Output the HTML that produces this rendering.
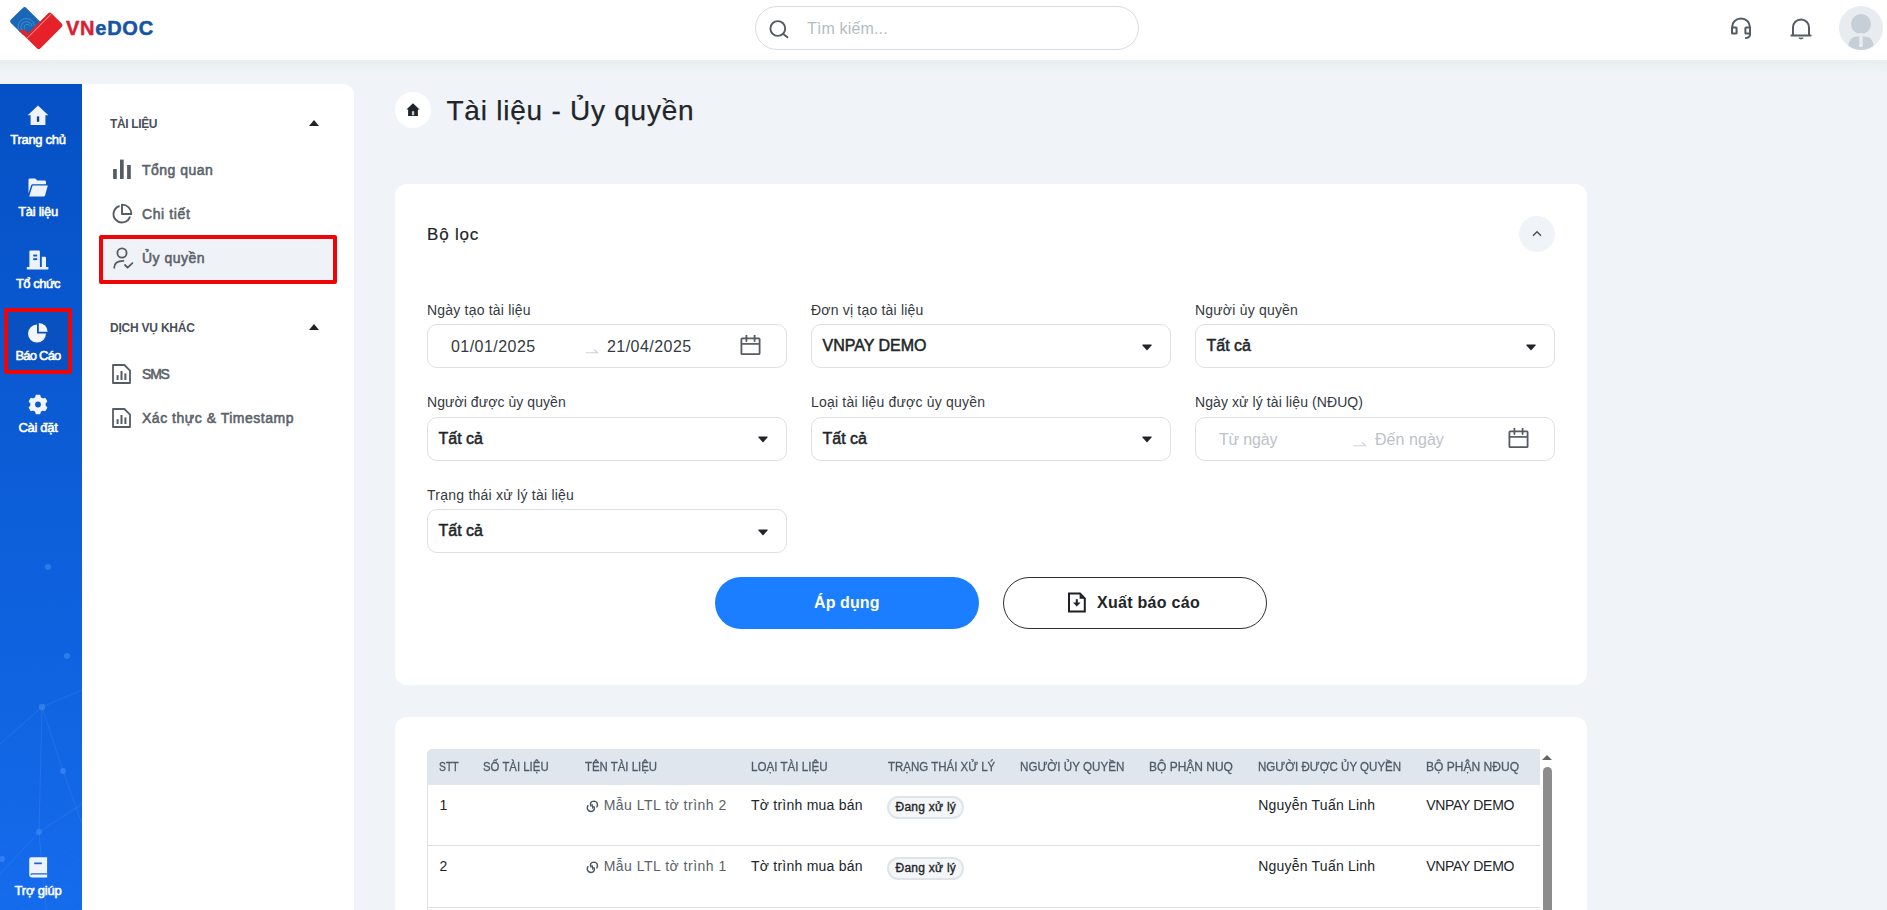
<!DOCTYPE html>
<html lang="vi">
<head>
<meta charset="utf-8">
<title>VNeDOC - Tài liệu - Ủy quyền</title>
<style>
*{box-sizing:border-box;margin:0;padding:0}
html,body{width:1887px;height:910px;overflow:hidden}
body{font-family:"Liberation Sans",sans-serif;background:#f0f4f8;color:#212529;position:relative}
.abs{position:absolute}
svg{display:block}

/* ---------- header ---------- */
#header{position:absolute;left:0;top:0;width:1887px;height:60px;background:#fff}
#hshadow{position:absolute;left:0;top:60px;width:1887px;height:14px;background:linear-gradient(#e8edef,#f0f4f8)}
#logo{position:absolute;left:0;top:0}
#logotext{position:absolute;left:66px;top:13.5px;font-size:20px;font-weight:700;letter-spacing:0.75px;line-height:28px;white-space:nowrap;-webkit-text-stroke:0.5px currentColor}
#search{position:absolute;left:755px;top:6px;width:384px;height:44px;border:1px solid #d9dcdf;border-radius:22px;background:#fff}
#search .ph{position:absolute;left:51px;top:12px;font-size:16px;line-height:20px;color:#b4bcc3;white-space:nowrap;letter-spacing:0.15px}
#search svg{position:absolute;left:12px;top:10px}

/* ---------- blue sidebar ---------- */
#side{position:absolute;left:0;top:84px;width:82px;height:826px;background:linear-gradient(180deg,#0550c4 0%,#146bec 100%);overflow:hidden}
.nav{position:absolute;left:0;width:76px;text-align:center;color:#fff;font-size:13px;font-weight:400;line-height:15px;white-space:nowrap;-webkit-text-stroke:0.55px #fff}
.nav svg{margin:0 auto 5px auto}
#redbox1{position:absolute;left:4px;top:224px;width:68px;height:66px;border:4px solid #ef0505;border-radius:2px}

/* ---------- white submenu ---------- */
#sub{position:absolute;left:82px;top:84px;width:272px;height:826px;background:#fff;border-top-right-radius:11px}
.grp{position:absolute;left:28px;font-size:12px;font-weight:700;color:#495057;line-height:14px;white-space:nowrap}
.caret{position:absolute;left:227px;width:0;height:0;border-left:5px solid transparent;border-right:5px solid transparent;border-bottom:6px solid #1f2429}
.item{position:absolute;left:60px;font-size:14px;font-weight:400;color:#5a6269;line-height:18px;white-space:nowrap;letter-spacing:0.47px;-webkit-text-stroke:0.55px #5a6269}
.iico{position:absolute;left:28px}
#active{position:absolute;left:19px;top:154px;width:235px;height:45px;background:#eff3f7}
#redbox2{position:absolute;left:17.4px;top:151.4px;width:237.9px;height:48.4px;border:4px solid #ef0505;border-radius:2px}

/* ---------- main ---------- */
#homec{position:absolute;left:395px;top:92px;width:36px;height:36px;border-radius:50%;background:#fff}
#title{position:absolute;left:446.5px;top:95px;font-size:28px;line-height:32px;letter-spacing:0.76px;-webkit-text-stroke:0.25px #212529;color:#212529;white-space:nowrap}
.card{position:absolute;left:395px;width:1192px;background:#fff;border-radius:12px}
#fcard{top:184px;height:501px}
#tcard{top:717px;height:240px}
#fttl{position:absolute;left:32px;top:41px;font-size:17px;line-height:20px;letter-spacing:0.8px;-webkit-text-stroke:0.2px #212529;color:#212529;white-space:nowrap}
#collapse{position:absolute;left:1124px;top:32px;width:36px;height:36px;border-radius:50%;background:#f0f4f8}
.lbl{position:absolute;font-size:14px;line-height:16px;color:#343a40;white-space:nowrap}
.inp{position:absolute;width:360px;height:44px;border:1px solid #dddfe2;border-radius:10px;background:#fff}
.sel{position:absolute;left:10.5px;top:11px;font-size:16px;font-weight:400;line-height:20px;color:#212529;white-space:nowrap;-webkit-text-stroke:0.5px #212529}
.dcaret{position:absolute;left:329px;top:18.5px}
.dt{position:absolute;top:12px;font-size:16px;line-height:20px;color:#343a40;white-space:nowrap;letter-spacing:0.45px}
.dph{color:#bcc2c8;letter-spacing:0.05px}
.cal{position:absolute;left:312px;top:10px}
.arr{position:absolute;left:157px;top:23px}
.btn{position:absolute;top:393px;width:264px;height:52px;border-radius:26px;font-size:16px;font-weight:700;line-height:20px;white-space:nowrap}
#bapply{left:320px;background:#1b7dff;color:#fff}
#bexport{left:608px;background:#fff;border:1px solid #2c3136;color:#212529}
/* table */
#thead{position:absolute;left:32px;top:32px;width:1113px;height:36px;background:#dfe6ee;border-top-left-radius:5px}
.th{position:absolute;top:10px;font-size:12.5px;line-height:16px;color:#4f5b67;-webkit-text-stroke:0.3px #4f5b67;white-space:nowrap;transform-origin:0 50%}
.td{position:absolute;font-size:14px;line-height:16px;color:#212529;white-space:nowrap}
.rowline{position:absolute;left:32px;width:1113px;height:1px;background:#dee2e6}
.badge{position:absolute;left:491.5px;width:77px;height:23px;border:2px solid #dfe4e8;border-radius:12px;background:#f4f6f8;font-size:12px;font-weight:400;line-height:19.5px;text-align:center;color:#212529;white-space:nowrap;letter-spacing:0.25px;padding-left:1.6px;-webkit-text-stroke:0.35px #212529}
</style>
</head>
<body>

<!-- HEADER -->
<div id="header">
  <svg id="logo" width="70" height="56" viewBox="0 0 70 56">
    <path d="M22.8 7.9 Q24.6 6.1 26.4 7.9 L40.5 22 L28 35 L23 35 L10.9 23 Q9.1 21.2 10.9 19.4 Z" fill="#1a67b5"/>
    <g fill="none" stroke="#3f93dc" stroke-width="0.9">
      <path d="M25 29.5 a3 3 0 1 1 5 -3"/>
      <path d="M22.4 31 a5.6 5.6 0 1 1 9.6 -5"/>
      <path d="M20 32 a8.2 8.2 0 1 1 14.4 -6.6"/>
    </g>
    <path d="M19.3 31 L36.9 48.3 Q38.7 50.1 40.5 48.3 L61.7 27.1 Q63.5 25.3 61.7 23.5 L51.6 13.4 Q49.8 11.6 48 13.4 L27.8 33.6 L23.6 29.4 Q21 29.4 19.3 31 Z" fill="#e62129"/>
    <path d="M50.8 14.5 L27 38.3" stroke="#fff" stroke-width="0.7" fill="none" opacity="0.9"/>
  </svg>
  <div id="logotext"><span style="color:#d81f35">VN</span><span style="color:#15569f">eDOC</span></div>

  <div id="search">
    <svg width="26" height="26" viewBox="0 0 26 26"><circle cx="9.8" cy="11.5" r="7.4" fill="none" stroke="#555c63" stroke-width="1.9"/><path d="M15.6 17.2 L19.4 20.2" stroke="#555c63" stroke-width="2" stroke-linecap="round"/></svg>
    <div class="ph">Tìm kiếm...</div>
  </div>

  <!-- headset -->
  <svg class="abs" style="left:1729px;top:16px" width="24" height="25" viewBox="0 0 24 25"><path d="M3 14 V11.4 A9 9 0 0 1 21 11.4 V14" fill="none" stroke="#555c63" stroke-width="2"/><rect x="3" y="11.6" width="4.6" height="6" rx="0.6" fill="none" stroke="#555c63" stroke-width="2"/><rect x="16.4" y="11.6" width="4.6" height="6" rx="0.6" fill="none" stroke="#555c63" stroke-width="2"/><path d="M21 17 V18.4 Q21 21.4 17 22" fill="none" stroke="#555c63" stroke-width="2" stroke-linecap="round"/></svg>
  <!-- bell -->
  <svg class="abs" style="left:1789px;top:16px" width="24" height="25" viewBox="0 0 24 25"><path d="M4 19 V11.4 A8 8 0 0 1 20 11.4 V19" fill="none" stroke="#555c63" stroke-width="2"/><path d="M2.4 19.4 H21.6" stroke="#555c63" stroke-width="2" stroke-linecap="round"/><path d="M9.8 22 H14.2 Q12 24.2 9.8 22 Z" fill="#555c63" stroke="#555c63" stroke-width="0.8" stroke-linejoin="round"/></svg>
  <!-- avatar -->
  <svg class="abs" style="left:1839px;top:6px" width="44" height="44" viewBox="0 0 44 44"><defs><clipPath id="avc"><circle cx="22" cy="22" r="22"/></clipPath></defs><circle cx="22" cy="22" r="22" fill="#e8ecf1"/><g clip-path="url(#avc)"><circle cx="22" cy="18" r="10" fill="#c6ced7"/><path d="M9 44 Q9 31 18 30.6 H26 Q35 31 35 44 Z" fill="#c6ced7"/><rect x="20.3" y="27" width="3.4" height="14" fill="#e8ecf1"/></g></svg>
</div>
<div id="hshadow"></div>

<!-- BLUE SIDEBAR -->
<div id="side">
  <svg class="abs" style="left:0;top:0" width="82" height="826" viewBox="0 0 82 826">
    <defs><pattern id="hatch" width="14" height="14" patternUnits="userSpaceOnUse" patternTransform="rotate(32)"><path d="M0 0 H14" stroke="#4b92f3" stroke-width="0.6" opacity="0.22"/></pattern>
    <linearGradient id="hfade" x1="0" y1="0" x2="0" y2="1"><stop offset="0" stop-color="#fff" stop-opacity="0"/><stop offset="0.55" stop-color="#fff" stop-opacity="0"/><stop offset="1" stop-color="#fff" stop-opacity="1"/></linearGradient>
    <mask id="hm"><rect width="82" height="826" fill="url(#hfade)"/></mask></defs>
    <rect width="82" height="826" fill="url(#hatch)" mask="url(#hm)"/>
    <g stroke="#4f95f4" stroke-width="0.7" opacity="0.4" fill="none">
      <path d="M42 623 L39 748 M42 623 L82 606 M42 623 L0 660 M39 748 L0 790 M39 748 L82 720 M63 687 L42 623 M63 687 L82 740 M39 748 L46 826"/>
    </g>
    <g fill="#4a90f2" opacity="0.55">
      <circle cx="48" cy="483" r="3"/><circle cx="67" cy="572" r="3"/><circle cx="42" cy="623" r="3.2"/><circle cx="63" cy="687" r="3"/><circle cx="39" cy="748" r="3"/><circle cx="2" cy="775" r="3"/>
    </g>
  </svg>
  <div class="abs" style="left:7px;top:228px;width:63px;height:59px;background:#0950c1"></div>

  <!-- Trang chu -->
  <svg class="abs" style="left:27px;top:21px" width="22" height="21" viewBox="0 0 22 21"><path d="M11 0.5 L21.3 10.2 H18.4 V20 H3.6 V10.2 H0.7 Z" fill="#eef3fb"/><rect x="9.9" y="11.4" width="2.3" height="5.4" fill="#163f7d"/></svg>
  <div class="nav" style="top:48px;letter-spacing:-0.3px">Trang chủ</div>
  <!-- Tai lieu -->
  <svg class="abs" style="left:28px;top:94px" width="20" height="19" viewBox="0 0 20 19"><path d="M0.5 2 Q0.5 0.6 1.9 0.6 H7.2 L9.4 2.6 H16.6 Q18 2.6 18 4 V6.2 H4.6 Q3.5 6.2 3.2 7.2 L0.5 15.5 Z" fill="#eef3fb"/><path d="M4.6 7.6 H19.8 L17 17.4 Q16.7 18.4 15.6 18.4 H1.2 Z" fill="#eef3fb"/></svg>
  <div class="nav" style="top:120px;letter-spacing:-0.27px">Tài liệu</div>
  <!-- To chuc -->
  <svg class="abs" style="left:26px;top:166px" width="23" height="20" viewBox="0 0 23 20"><path d="M3.4 17.6 V1.6 Q3.4 0.5 4.5 0.5 H12.8 Q13.9 0.5 13.9 1.6 V17.6 Z" fill="#eef3fb"/><path d="M15.8 17.6 V6.8 H19 Q20 6.8 20 7.8 V17.6 Z" fill="#eef3fb"/><rect x="0.8" y="17" width="21.6" height="2.4" rx="0.6" fill="#eef3fb"/><rect x="7.2" y="4.6" width="4" height="1.9" fill="#0a59d1"/><rect x="7.2" y="8.2" width="4" height="1.9" fill="#0a59d1"/></svg>
  <div class="nav" style="top:192px;letter-spacing:-0.5px">Tổ chức</div>
  <!-- Bao cao -->
  <svg class="abs" style="left:28px;top:237.5px" width="21" height="21" viewBox="0 0 21 21"><path d="M9 2.6 V11.6 H18 A9 9 0 1 1 9 2.6 Z" fill="#f2f6fc"/><path d="M10.8 1 A8.8 8.8 0 0 1 19.6 9.8 H10.8 Z" fill="#f2f6fc"/></svg>
  <div class="nav" style="top:264px;letter-spacing:-0.78px">Báo Cáo</div>
  <!-- Cai dat -->
  <svg class="abs" style="left:28px;top:309.5px" width="20" height="21" viewBox="0 0 20 21"><path fill="#f2f6fc" stroke="#f2f6fc" stroke-width="1.8" stroke-linejoin="round" fill-rule="evenodd" d="M11.55 1.74 L8.45 1.74 L7.87 3.94 L5.38 5.37 L3.18 4.78 L1.64 7.46 L3.25 9.07 L3.25 11.93 L1.64 13.54 L3.18 16.22 L5.38 15.63 L7.87 17.06 L8.45 19.26 L11.55 19.26 L12.13 17.06 L14.62 15.63 L16.82 16.22 L18.36 13.54 L16.75 11.93 L16.75 9.07 L18.36 7.46 L16.82 4.78 L14.62 5.37 L12.13 3.94 Z M10 6.7 A3.8 3.8 0 1 0 10 14.3 A3.8 3.8 0 1 0 10 6.7 Z"/></svg>
  <div class="nav" style="top:336px;letter-spacing:-0.33px">Cài đặt</div>
  <!-- Tro giup -->
  <svg class="abs" style="left:29px;top:772.6px" width="19" height="21" viewBox="0 0 19 21"><path d="M0.2 2.4 Q0.2 0.3 2.3 0.3 H18.1 V20.4 H2.6 Q0.2 20.4 0.2 18 Z" fill="#eef3fb"/><path d="M18.1 16.9 H3 Q1.9 16.9 1.9 18" fill="none" stroke="#1c63d6" stroke-width="1.1"/><rect x="5.2" y="5.5" width="7.6" height="1.7" fill="#1563de"/></svg>
  <div class="nav" style="top:799px;letter-spacing:-0.2px">Trợ giúp</div>
  <div id="redbox1"></div>
</div>

<!-- SUBMENU -->
<div id="sub">
  <div class="grp" style="top:33px;letter-spacing:-0.36px">TÀI LIỆU</div>
  <div class="caret" style="top:36px"></div>

  <svg class="iico" style="top:75px;left:30px" width="20" height="20" viewBox="0 0 20 20"><rect x="1.1" y="10" width="3.7" height="10" fill="#555d64"/><rect x="8" y="0.6" width="3.7" height="19.4" fill="#555d64"/><rect x="15.1" y="6" width="3.7" height="14" fill="#555d64"/></svg>
  <div class="item" style="top:77px">Tổng quan</div>

  <svg class="iico" style="top:119px;left:29px" width="22" height="22" viewBox="0 0 22 22"><path d="M8.6 3 A8.4 8.4 0 1 0 19 13.4" fill="none" stroke="#555d64" stroke-width="1.9"/><path d="M11 1.6 A9.4 9.4 0 0 1 20.4 11 H11 Z" fill="none" stroke="#555d64" stroke-width="1.9" stroke-linejoin="round"/></svg>
  <div class="item" style="top:121px;letter-spacing:0.6px">Chi tiết</div>

  <div id="active"></div>
  <svg class="iico" style="top:163px;left:31px" width="21" height="22" viewBox="0 0 21 22"><circle cx="9" cy="6" r="4.6" fill="none" stroke="#555d64" stroke-width="1.8"/><path d="M1.2 20.8 Q1.2 14 10.4 13.9" fill="none" stroke="#555d64" stroke-width="1.8" stroke-linecap="round"/><path d="M12 18 L14.6 20.6 L19.4 16.2" fill="none" stroke="#555d64" stroke-width="1.8" stroke-linecap="round" stroke-linejoin="round"/></svg>
  <div class="item" style="top:165px">Ủy quyền</div>
  <div id="redbox2"></div>

  <div class="grp" style="top:237px;letter-spacing:-0.22px">DỊCH VỤ KHÁC</div>
  <div class="caret" style="top:240px"></div>

  <svg class="iico" style="top:280px;left:30px" width="19" height="20" viewBox="0 0 19 20"><path d="M1 1 H12.4 L18 6.6 V19 H1 Z" fill="none" stroke="#555d64" stroke-width="1.8" stroke-linejoin="round"/><rect x="4.6" y="11.2" width="2" height="4.8" fill="#555d64"/><rect x="8.5" y="7" width="2" height="9" fill="#555d64"/><rect x="12.4" y="9.4" width="2" height="6.6" fill="#555d64"/></svg>
  <div class="item" style="top:281px;letter-spacing:-1.2px">SMS</div>

  <svg class="iico" style="top:324px;left:30px" width="19" height="20" viewBox="0 0 19 20"><path d="M1 1 H12.4 L18 6.6 V19 H1 Z" fill="none" stroke="#555d64" stroke-width="1.8" stroke-linejoin="round"/><rect x="4.6" y="11.2" width="2" height="4.8" fill="#555d64"/><rect x="8.5" y="7" width="2" height="9" fill="#555d64"/><rect x="12.4" y="9.4" width="2" height="6.6" fill="#555d64"/></svg>
  <div class="item" style="top:325px;letter-spacing:0.52px">Xác thực &amp; Timestamp</div>
</div>

<!-- MAIN -->
<div id="main">
  <div id="homec"><svg class="abs" style="left:11.4px;top:10.6px" width="14" height="14" viewBox="0 0 14 14"><path d="M7 0.3 L13.6 6.6 H11.9 V13 H2.1 V6.6 H0.4 Z" fill="#212529"/><rect x="5.9" y="8.2" width="2.3" height="4" fill="#c9cdd1"/></svg></div>
  <div id="title">Tài liệu - Ủy quyền</div>

  <div class="card" id="fcard">
    <div id="fttl">Bộ lọc</div>
    <div id="collapse"><svg class="abs" style="left:13px;top:14px" width="10" height="7" viewBox="0 0 10 7"><path d="M1 5.8 L5 1.7 L9 5.8" fill="none" stroke="#474d53" stroke-width="1.35"/></svg></div>

    <div class="lbl" style="left:32px;top:118px;letter-spacing:0.2px">Ngày tạo tài liệu</div>
    <div class="inp" style="left:32px;top:140px"><div class="dt" style="left:23px">01/01/2025</div><svg class="arr" width="14" height="6" viewBox="0 0 14 6"><path d="M0.5 4.8 H12.6 L9 1.4" fill="none" stroke="#cdd2d6" stroke-width="1.1"/></svg><div class="dt" style="left:179px">21/04/2025</div><svg class="cal" width="22" height="22" viewBox="0 0 22 22"><rect x="1.4" y="3.4" width="18.2" height="15.8" rx="0.8" fill="none" stroke="#565b61" stroke-width="1.8"/><path d="M1.4 8.9 H19.6" stroke="#565b61" stroke-width="1.7" fill="none"/><path d="M6.4 0.5 V6 M14.6 0.5 V6" stroke="#565b61" stroke-width="1.8" stroke-linecap="round" fill="none"/></svg></div>

    <div class="lbl" style="left:416px;top:118px;letter-spacing:0.2px">Đơn vị tạo tài liệu</div>
    <div class="inp" style="left:416px;top:140px"><div class="sel">VNPAY DEMO</div><svg class="dcaret" width="12" height="8" viewBox="0 0 12 8"><path d="M1.7 0.6 H10.3 Q11 0.7 10.5 1.4 L6.5 6 Q6 6.5 5.5 6 L1.5 1.4 Q1 0.7 1.7 0.6 Z" fill="#212529"/></svg></div>

    <div class="lbl" style="left:800px;top:118px;letter-spacing:0.2px">Người ủy quyền</div>
    <div class="inp" style="left:800px;top:140px"><div class="sel">Tất cả</div><svg class="dcaret" width="12" height="8" viewBox="0 0 12 8"><path d="M1.7 0.6 H10.3 Q11 0.7 10.5 1.4 L6.5 6 Q6 6.5 5.5 6 L1.5 1.4 Q1 0.7 1.7 0.6 Z" fill="#212529"/></svg></div>

    <div class="lbl" style="left:32px;top:210px;letter-spacing:0.07px">Người được ủy quyền</div>
    <div class="inp" style="left:32px;top:232.5px"><div class="sel">Tất cả</div><svg class="dcaret" width="12" height="8" viewBox="0 0 12 8"><path d="M1.7 0.6 H10.3 Q11 0.7 10.5 1.4 L6.5 6 Q6 6.5 5.5 6 L1.5 1.4 Q1 0.7 1.7 0.6 Z" fill="#212529"/></svg></div>

    <div class="lbl" style="left:416px;top:210px;letter-spacing:0.2px">Loại tài liệu được ủy quyền</div>
    <div class="inp" style="left:416px;top:232.5px"><div class="sel">Tất cả</div><svg class="dcaret" width="12" height="8" viewBox="0 0 12 8"><path d="M1.7 0.6 H10.3 Q11 0.7 10.5 1.4 L6.5 6 Q6 6.5 5.5 6 L1.5 1.4 Q1 0.7 1.7 0.6 Z" fill="#212529"/></svg></div>

    <div class="lbl" style="left:800px;top:210px;letter-spacing:0.09px">Ngày xử lý tài liệu (NĐUQ)</div>
    <div class="inp" style="left:800px;top:232.5px"><div class="dt dph" style="left:23px;letter-spacing:-0.2px">Từ ngày</div><svg class="arr" width="14" height="6" viewBox="0 0 14 6"><path d="M0.5 4.8 H12.6 L9 1.4" fill="none" stroke="#cdd2d6" stroke-width="1.1"/></svg><div class="dt dph" style="left:179px">Đến ngày</div><svg class="cal" width="22" height="22" viewBox="0 0 22 22"><rect x="1.4" y="3.4" width="18.2" height="15.8" rx="0.8" fill="none" stroke="#565b61" stroke-width="1.8"/><path d="M1.4 8.9 H19.6" stroke="#565b61" stroke-width="1.7" fill="none"/><path d="M6.4 0.5 V6 M14.6 0.5 V6" stroke="#565b61" stroke-width="1.8" stroke-linecap="round" fill="none"/></svg></div>

    <div class="lbl" style="left:32px;top:303px;letter-spacing:0.24px">Trạng thái xử lý tài liệu</div>
    <div class="inp" style="left:32px;top:325px"><div class="sel">Tất cả</div><svg class="dcaret" width="12" height="8" viewBox="0 0 12 8"><path d="M1.7 0.6 H10.3 Q11 0.7 10.5 1.4 L6.5 6 Q6 6.5 5.5 6 L1.5 1.4 Q1 0.7 1.7 0.6 Z" fill="#212529"/></svg></div>

    <div class="btn" id="bapply"><span class="abs" style="left:99px;top:16px;letter-spacing:0.1px">Áp dụng</span></div>
    <div class="btn" id="bexport">
      <svg class="abs" style="left:63px;top:14.4px" width="20" height="21" viewBox="0 0 20 21"><path d="M2 1.6 H13 L17.8 6.4 V19.6 H2 Z" fill="none" stroke="#1d2125" stroke-width="2" stroke-linejoin="miter"/><path d="M12.6 2 V6.8 H17.4 Z" fill="#1d2125"/><path d="M9.8 7.2 V12" fill="none" stroke="#1d2125" stroke-width="2"/><path d="M6 10.6 H13.6 L9.8 14.6 Z" fill="#1d2125"/></svg>
      <span class="abs" style="left:93px;top:15px;letter-spacing:0.28px">Xuất báo cáo</span>
    </div>
  </div>

  <div class="card" id="tcard">
    <div class="abs" style="left:32px;top:36px;width:1px;height:200px;background:#dee2e6"></div>
    <div id="thead">
      <div class="th" style="left:11.7px;transform:scaleX(0.826)">STT</div>
      <div class="th" style="left:55.8px;transform:scaleX(0.911)">SỐ TÀI LIỆU</div>
      <div class="th" style="left:158.4px;transform:scaleX(0.912)">TÊN TÀI LIỆU</div>
      <div class="th" style="left:324.1px;transform:scaleX(0.929)">LOẠI TÀI LIỆU</div>
      <div class="th" style="left:460.6px;transform:scaleX(0.919)">TRẠNG THÁI XỬ LÝ</div>
      <div class="th" style="left:592.9px;transform:scaleX(0.93)">NGƯỜI ỦY QUYỀN</div>
      <div class="th" style="left:722.3px;transform:scaleX(0.959)">BỘ PHẬN NUQ</div>
      <div class="th" style="left:831.2px;transform:scaleX(0.923)">NGƯỜI ĐƯỢC ỦY QUYỀN</div>
      <div class="th" style="left:999.3px;transform:scaleX(0.964)">BỘ PHẬN NĐUQ</div>
      </div>
    <div class="td" style="left:44.5px;top:79.5px">1</div>
<svg class="abs" style="left:190.6px;top:82.8px" width="13" height="13" viewBox="0 0 13 13"><g fill="none" stroke="#4e565d" stroke-width="1.45" stroke-linecap="round"><path d="M4.9 5.9 C3.6 3.6 5 1.2 7.8 1.1 C10.8 1.1 12.4 4 10.9 6.9"/><path d="M7.9 6.7 C9.2 9 7.8 11.4 5 11.5 C2 11.5 0.4 8.6 1.9 5.7"/><path d="M6 4.6 L6.8 8"/></g></svg>
<div class="td" style="left:208.7px;top:79.5px;color:#5a6268;letter-spacing:0.49px">Mẫu LTL tờ trình 2</div>
<div class="td" style="left:356px;top:79.5px;letter-spacing:0.24px">Tờ trình mua bán</div>
<div class="badge" style="top:78.5px">Đang xử lý</div>
<div class="td" style="left:863.2px;top:79.5px;letter-spacing:0.22px">Nguyễn Tuấn Linh</div>
<div class="td" style="left:1031.3px;top:79.5px;letter-spacing:-0.33px">VNPAY DEMO</div>

    <div class="rowline" style="top:128px"></div>
    <div class="td" style="left:44.5px;top:140.5px">2</div>
<svg class="abs" style="left:190.6px;top:143.8px" width="13" height="13" viewBox="0 0 13 13"><g fill="none" stroke="#4e565d" stroke-width="1.45" stroke-linecap="round"><path d="M4.9 5.9 C3.6 3.6 5 1.2 7.8 1.1 C10.8 1.1 12.4 4 10.9 6.9"/><path d="M7.9 6.7 C9.2 9 7.8 11.4 5 11.5 C2 11.5 0.4 8.6 1.9 5.7"/><path d="M6 4.6 L6.8 8"/></g></svg>
<div class="td" style="left:208.7px;top:140.5px;color:#5a6268;letter-spacing:0.49px">Mẫu LTL tờ trình 1</div>
<div class="td" style="left:356px;top:140.5px;letter-spacing:0.24px">Tờ trình mua bán</div>
<div class="badge" style="top:139.5px">Đang xử lý</div>
<div class="td" style="left:863.2px;top:140.5px;letter-spacing:0.22px">Nguyễn Tuấn Linh</div>
<div class="td" style="left:1031.3px;top:140.5px;letter-spacing:-0.33px">VNPAY DEMO</div>

    <div class="rowline" style="top:190px"></div>
    <!-- scrollbar -->
    <div class="abs" style="left:1147px;top:38px;width:0;height:0;border-left:5.5px solid transparent;border-right:5.5px solid transparent;border-bottom:5px solid #666"></div>
    <div class="abs" style="left:1148px;top:50px;width:9px;height:200px;background:#8c8c8c;border-radius:4.5px 4.5px 0 0"></div>
  </div>
</div>

</body>
</html>
